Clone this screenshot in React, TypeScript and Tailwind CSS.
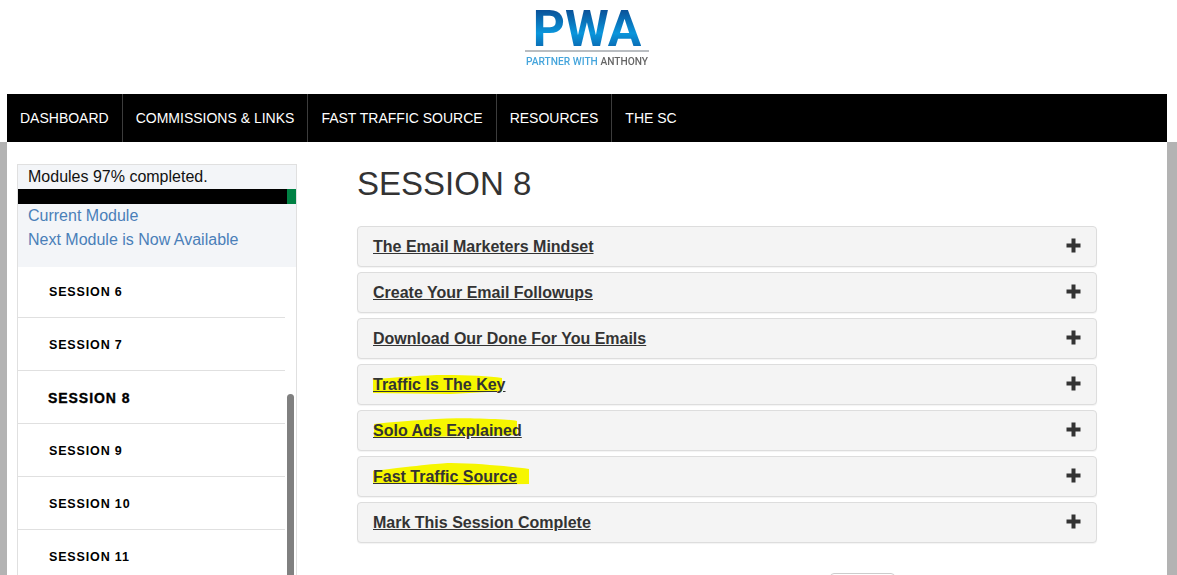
import React from "react";

const navItems = ["DASHBOARD", "COMMISSIONS & LINKS", "FAST TRAFFIC SOURCE", "RESOURCES", "THE SC"];
const sessions = [
  { label: "SESSION 6", active: false },
  { label: "SESSION 7", active: false },
  { label: "SESSION 8", active: true },
  { label: "SESSION 9", active: false },
  { label: "SESSION 10", active: false },
  { label: "SESSION 11", active: false },
];

function Marker({ d, className }: { d: string; className: string }) {
  return (
    <svg className={`absolute z-0 ${className}`} viewBox="0 0 100 100" preserveAspectRatio="none" aria-hidden="true">
      <path d={d} fill="#f6f600" />
    </svg>
  );
}

const panels: { title: string; mark?: React.ReactNode }[] = [
  { title: "The Email Marketers Mindset" },
  { title: "Create Your Email Followups" },
  { title: "Download Our Done For You Emails" },
  {
    title: "Traffic Is The Key",
    mark: <Marker className="left-0 top-[-1px] w-[129px] h-[19px]" d="M0 22 C20 12 40 0 55 0 C75 0 90 5 100 16 L100 85 L60 100 L0 95 Z" />,
  },
  {
    title: "Solo Ads Explained",
    mark: <Marker className="left-[1px] top-[-4px] w-[143px] h-[20px]" d="M0 30 C30 10 50 0 70 2 C85 4 95 8 100 15 L100 85 L50 92 L0 100 Z" />,
  },
  {
    title: "Fast Traffic Source",
    mark: <Marker className="left-0 top-[-5px] w-[156px] h-[22px]" d="M0 36 C30 10 45 0 50 0 C70 2 90 18 100 27 L100 95 L60 100 L0 90 Z" />,
  },
  { title: "Mark This Session Complete" },
];

function PlusIcon() {
  return (
    <svg width="15" height="15" viewBox="0 0 15 15" aria-hidden="true" className="shrink-0 mt-[-3px]">
      <path d="M5.5 0.5h4v5h5v4h-5v5h-4v-5h-5v-4h5z" fill="#333333" />
    </svg>
  );
}

export default function App() {
  return (
    <div className="h-screen overflow-hidden bg-white flex flex-col font-['Liberation_Sans',Arial,sans-serif]">
      <header className="h-[94px] shrink-0 flex justify-center">
        <div className="w-[124px] ml-[-3px] flex flex-col items-center">
          <div className="mt-[3px] h-[52px] font-['Roboto',sans-serif] text-[50px] leading-[52px] font-bold tracking-[0px] bg-gradient-to-b from-[#0a4f96] from-[12%] via-[#0a96dc] via-[58%] to-[#0a6cb4] to-[85%] bg-clip-text text-transparent blur-[0.4px]">
            PWA
          </div>
          <div className="mt-[-5px] h-[2px] w-full bg-[#b9bdc1]" />
          <div className="mt-[3px] font-['Roboto',sans-serif] font-medium text-[10.2px] leading-[14px] whitespace-nowrap blur-[0.25px]">
            <span className="text-[#45a5dc]">PARTNER WITH</span> <span className="text-[#666666]">ANTHONY</span>
          </div>
        </div>
      </header>

      <nav className="h-[48px] shrink-0 ml-[7px] mr-[10px] bg-black flex">
        {navItems.map((item, i) => (
          <a
            key={item}
            className={`flex items-center pt-[1px] pl-[13px] pr-[13px] text-[14px] text-white whitespace-nowrap ${i < 4 ? "border-r border-[#3c3c3c]" : ""}`}
          >
            {item}
          </a>
        ))}
      </nav>

      <div className="flex-1 min-h-0 bg-[#b3b3b3] pl-[7px] pr-[10px]">
        <div className="h-full bg-white flex items-start overflow-hidden">
          <aside className="relative mt-[22px] ml-[10px] w-[280px] shrink-0 border-x border-t border-[#e0e0e0] h-[500px] overflow-hidden">
            <div className="bg-[#f3f5f8] h-[102px]">
              <div className="px-[10px] text-[16px] leading-[24px] text-[#111111]">Modules 97% completed.</div>
              <div className="h-[15px] bg-black flex justify-end">
                <div className="w-[9px] bg-[#008144]" />
              </div>
              <div className="px-[10px] text-[16px] leading-[24px] text-[#4a7fb8]">
                <div>Current Module</div>
                <div>Next Module is Now Available</div>
              </div>
            </div>
            <ul className="mr-[11px] mt-[-2px]">
              {sessions.map((s) => (
                <li key={s.label} className="h-[53px] border-b border-[#e0e0e0] pt-[18px]">
                  <span
                    className={
                      s.active
                        ? "block pl-[30px] text-[14px] leading-[18px] font-bold tracking-[0.95px] text-black [-webkit-text-stroke:0.35px_black]"
                        : "block pl-[31px] text-[12.5px] leading-[18px] font-bold tracking-[0.85px] text-black"
                    }
                  >
                    {s.label}
                  </span>
                </li>
              ))}
            </ul>
            <div className="absolute right-[2px] top-[229px] bottom-0 w-[7px] rounded-t-[4px] bg-[#808080]" />
          </aside>

          <main className="ml-[60px] w-[740px] shrink-0">
            <h1 className="mt-[24px] text-[33px] leading-[36px] font-normal text-[#333333]">SESSION 8</h1>
            <div className="mt-[24px] flex flex-col gap-[5px]">
              {panels.map((p) => (
                <div
                  key={p.title}
                  className="h-[41px] rounded-[4px] border border-[#dddddd] bg-[#f4f4f4] shadow-[0_1px_1px_rgba(0,0,0,0.05)] pl-[15px] pr-[15px] flex items-center justify-between"
                >
                  <span className="relative text-[16px] font-bold leading-[18px] text-[#333333] underline">
                    {p.mark}
                    <span className="relative z-10">{p.title}</span>
                  </span>
                  <PlusIcon />
                </div>
              ))}
            </div>
            <div className="mt-[30px] ml-[473px] w-[65px] h-[30px] rounded-[4px] border border-[#cccccc] bg-white" />
          </main>
        </div>
      </div>
    </div>
  );
}
